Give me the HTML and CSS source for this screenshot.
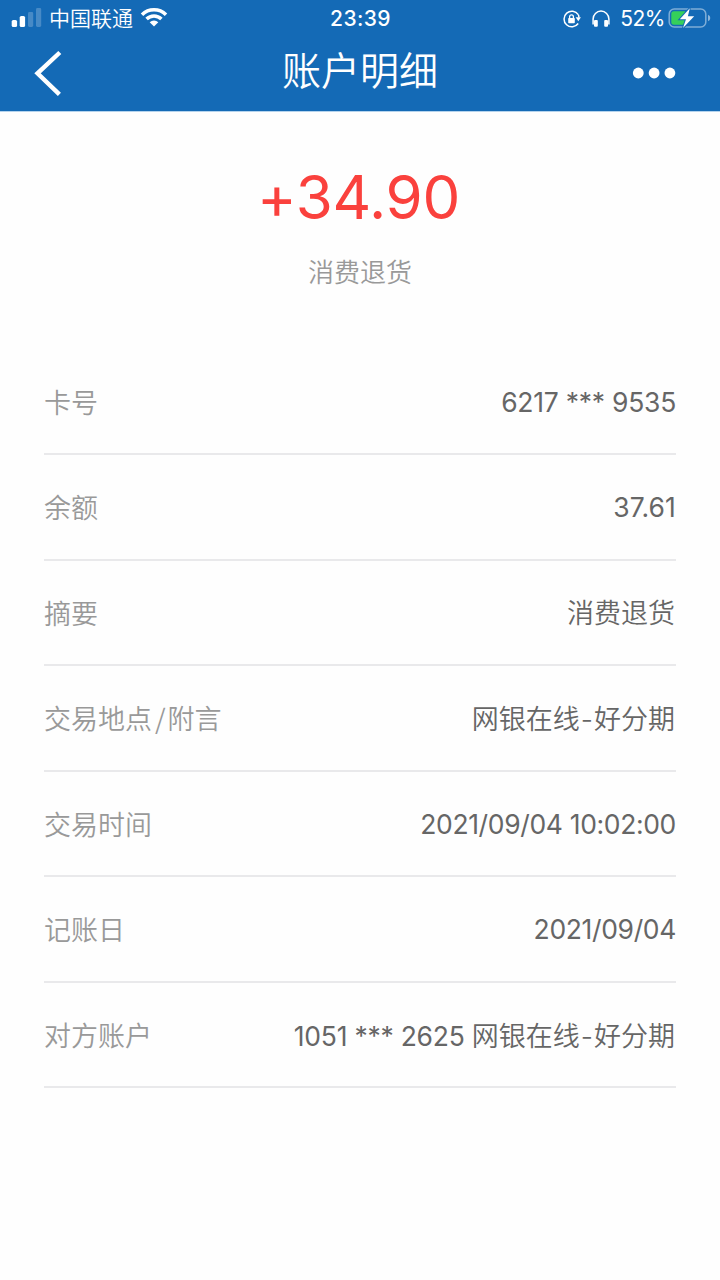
FILE: index.html
```
<!DOCTYPE html>
<html lang="zh-CN">
<head>
<meta charset="utf-8">
<title>账户明细</title>
<link rel="stylesheet" href="styles.css">
</head>
<body>
<header class="header">
  <div class="status">
    <div class="status-left">
      <svg class="signal" width="32" height="20" viewBox="0 0 32 20" fill="#fff">
        <rect x="1.7" y="12" width="5.4" height="7" rx="1.6"/>
        <rect x="9.7" y="8" width="5.4" height="11" rx="1.6"/>
        <rect x="18" y="4" width="5.2" height="15" rx="1.4" opacity=".22"/>
        <rect x="26" y="0" width="5.2" height="19" rx="1.4" opacity=".22"/>
      </svg>
      <span class="carrier">中国联通</span>
      <svg class="wifi" width="28" height="20" viewBox="0 0 28 20">
        <g fill="none" stroke="#fff" stroke-width="3.5">
          <path d="M2 7.7a17 17 0 0 1 24 0"/>
          <path d="M6.6 12.1a10.5 10.5 0 0 1 14.8 0"/>
        </g>
        <path fill="#fff" d="M9.7 15.2a6.2 6.2 0 0 1 8.6 0L14 19.5z"/>
      </svg>
    </div>
    <span class="clock">23:39</span>
    <div class="status-right">
      <svg class="lock" width="20" height="20" viewBox="0 0 20 20">
        <path d="M16.2 14.5A7.8 7.8 0 1 1 16.3 5.6" fill="none" stroke="#fff" stroke-width="1.5"/>
        <path d="M13.7 8.2h5.2l-2.6 4z" fill="#fff"/>
        <path d="M16.3 5.6q.6 1 .6 3" fill="none" stroke="#fff" stroke-width="1.5"/>
        <rect x="6.2" y="9" width="6.6" height="5.2" rx=".7" fill="#fff"/>
        <path d="M7.6 9.4V7.7a1.9 1.9 0 0 1 3.8 0v1.7" fill="none" stroke="#fff" stroke-width="1.3"/>
      </svg>
      <svg class="phones" width="20" height="20" viewBox="0 0 20 20">
        <path d="M2.1 15.5V10a7.9 7.9 0 0 1 15.8 0v5.5" fill="none" stroke="#fff" stroke-width="1.5"/>
        <rect x="3" y="11" width="3.8" height="6.8" rx="1" fill="#fff"/>
        <rect x="13.2" y="11" width="3.8" height="6.8" rx="1" fill="#fff"/>
      </svg>
      <span class="percent">52%</span>
      <svg class="battery" width="44" height="22" viewBox="0 0 44 22">
        <rect x="1.2" y="2" width="36.6" height="18" rx="5" fill="none" stroke="#fff" stroke-opacity=".45" stroke-width="1.5"/>
        <path d="M40 7.7q2.3 1 2.3 3.3t-2.3 3.3z" fill="#fff" opacity=".5"/>
        <path d="M6 4.2h11v13.6H6a2.7 2.7 0 0 1-2.7-2.7V6.9A2.7 2.7 0 0 1 6 4.2z" fill="#35cf5a"/>
        <path d="M21.8 1.2 11.8 12.3h6.2L15 21 26.2 9.3h-6.3z" fill="#fff" stroke="#146ab6" stroke-width="2" paint-order="stroke"/>
      </svg>
    </div>
  </div>
  <nav class="nav">
    <svg class="back" width="32" height="48" viewBox="0 0 32 48">
      <path d="M27.8 3.5 5.5 24.3l21.9 21" fill="none" stroke="#fff" stroke-width="4.4"/>
    </svg>
    <h1 class="title">账户明细</h1>
    <svg class="more" width="44" height="12" viewBox="0 0 44 12" fill="#fff">
      <circle cx="6.3" cy="6" r="5.4"/><circle cx="22.1" cy="6" r="5.4"/><circle cx="37.9" cy="6" r="5.4"/>
    </svg>
  </nav>
</header>
<main class="content">
  <section class="summary">
    <div class="amount">+34.90</div>
    <div class="kind">消费退货</div>
  </section>
  <dl class="details">
    <div class="row"><dt class="label">卡号</dt><dd class="value number">6217 *** 9535</dd></div>
    <div class="row"><dt class="label">余额</dt><dd class="value money">37.61</dd></div>
    <div class="row"><dt class="label">摘要</dt><dd class="value text">消费退货</dd></div>
    <div class="row"><dt class="label">交易地点<span class="slash">/</span>附言</dt><dd class="value text">网银在线<span class="dash">-</span>好分期</dd></div>
    <div class="row"><dt class="label">交易时间</dt><dd class="value date">2021/09/04 10:02:00</dd></div>
    <div class="row"><dt class="label">记账日</dt><dd class="value date">2021/09/04</dd></div>
    <div class="row"><dt class="label">对方账户</dt><dd class="value text"><span class="number">1051 *** 2625 </span>网银在线<span class="dash">-</span>好分期</dd></div>
  </dl>
</main>
</body>
</html>
```
FILE: styles.css
```
* { box-sizing: border-box; }
body {
  margin: 0;
  min-height: 1280px;
  background: #fefefe;
  font-family: Inter, "Noto Sans CJK SC", sans-serif;
}
.header {
  height: 112px;
  background: #146ab6;
  border-bottom: 1px solid #b4d3ed;
  color: #fff;
}
.status {
  height: 36px;
  display: grid;
  grid-template-columns: 1fr auto 1fr;
  align-items: center;
  padding: 0 9px 0 10px;
  line-height: 36px;
}
.status-left, .status-right { display: flex; align-items: center; }
.status-right { justify-content: flex-end; }
.signal { margin-top: -1px; }
.carrier { margin: 2px 0 0 7px; font-size: 21px; font-weight: 350; line-height: 34px; }
.wifi { margin: -2px 0 0 7px; }
.clock { padding-top: 2px; font-size: 21px; font-weight: 500; letter-spacing: .4px; line-height: 34px; }
.lock { margin-top: 1px; }
.phones { margin: 1px 0 0 9px; }
.percent { margin: 2px 0 0 9px; font-size: 21px; letter-spacing: -.5px; line-height: 34px; }
.battery { margin-left: 3px; margin-right: -1px; }
.nav {
  height: 73px;
  display: grid;
  grid-template-columns: 1fr auto 1fr;
  align-items: center;
  padding: 0 44px 0 32px;
}
.title {
  margin: 0 0 3px 12px;
  font-size: 39px;
  font-weight: 350;
  line-height: 60px;
}
.more { justify-self: end; }
.content { padding: 0 44px; }
.summary {
  height: 237.5px;
  padding-top: 45px;
  text-align: center;
}
.amount {
  padding-right: 3px;
  color: #fa413d;
  font-size: 60px;
  letter-spacing: -.3px;
  line-height: 80px;
}
.kind {
  margin-top: 16px;
  color: #999;
  font-size: 26px;
  font-weight: 350;
  line-height: 40px;
}
.details { margin: 0; }
.row {
  height: 105.5px;
  padding-top: 1px;
  display: flex;
  justify-content: space-between;
  align-items: center;
  border-bottom: 2px solid #e9e9eb;
  font-family: "Noto Sans CJK SC", sans-serif;
  font-size: 27px;
  font-weight: 350;
  line-height: 40px;
}
.label { color: #999; }
.slash { margin: 0 2px 0 3px; }
.value {
  margin: 0;
  color: #666;
  font-family: Inter, "Noto Sans CJK SC", sans-serif;
}
.text { padding: 3px 1px 0 0; }
.dash { margin: 0 1px; }
.number, .date, .money { font-size: 26.5px; font-weight: 400; }
.number { letter-spacing: -.25px; }
.date { letter-spacing: -.35px; }
.money { letter-spacing: .1px; }
```
